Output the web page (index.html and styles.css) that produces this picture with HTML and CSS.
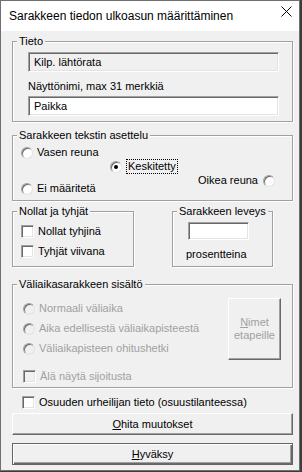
FILE: index.html
```html
<!DOCTYPE html>
<html lang="fi">
<head>
  <meta charset="UTF-8">
  <title>Sarakkeen tiedon ulkoasun määrittäminen</title>
  <link rel="stylesheet" href="styles.css">
</head>
<body>
  <div class="dialog">
    <div class="titlebar">
      <span class="title">Sarakkeen tiedon ulkoasun määrittäminen</span>
      <svg class="close" width="11" height="11" viewBox="0 0 11 11">
        <path d="M0.5 0.5 L10.5 10.5 M10.5 0.5 L0.5 10.5" stroke="#000" stroke-width="1" fill="none"/>
      </svg>
    </div>

    <div class="content">
      <!-- Tieto -->
      <fieldset class="group">
        <legend>Tieto</legend>
        <div class="group-body tieto">
          <div class="field readonly">Kilp. lähtörata</div>
          <div class="field-label">Näyttönimi, max 31 merkkiä</div>
          <div class="field">Paikka</div>
        </div>
      </fieldset>

      <!-- tekstin asettelu -->
      <fieldset class="group align-group">
        <legend>Sarakkeen tekstin asettelu</legend>
        <div class="group-body align">
          <div class="option"><span class="radio"></span>Vasen reuna</div>
          <div class="option center-opt"><span class="radio checked"></span><span class="focused">Keskitetty</span></div>
          <div class="align-last">
            <div class="option none-opt"><span class="radio"></span>Ei määritetä</div>
            <div class="option right-opt">Oikea reuna<span class="radio"></span></div>
          </div>
        </div>
      </fieldset>

      <div class="pair">
        <fieldset class="group zeros">
          <legend>Nollat ja tyhjät</legend>
          <div class="group-body zeros-body">
            <div class="option"><span class="check"></span>Nollat tyhjinä</div>
            <div class="option"><span class="check"></span>Tyhjät viivana</div>
          </div>
        </fieldset>
        <fieldset class="group width-group">
          <legend>Sarakkeen leveys</legend>
          <div class="group-body width-body">
            <div class="field small"></div>
            <div class="unit">prosentteina</div>
          </div>
        </fieldset>
      </div>

      <!-- väliajat, ei käytössä -->
      <fieldset class="group split-group">
        <legend>Väliaikasarakkeen sisältö</legend>
        <div class="group-body split-body">
          <div class="split-top">
            <div class="split-options">
              <div class="option disabled"><span class="radio"></span>Normaali väliaika</div>
              <div class="option disabled"><span class="radio"></span>Aika edellisestä väliaikapisteestä</div>
              <div class="option disabled"><span class="radio"></span>Väliaikapisteen ohitushetki</div>
            </div>
            <button class="btn names" disabled><u>N</u>imet<br>etapeille</button>
          </div>
          <div class="option disabled no-rank"><span class="check"></span>Älä näytä sijoitusta</div>
        </div>
      </fieldset>

      <div class="option leg-opt"><span class="check"></span>Osuuden urheilijan tieto (osuustilanteessa)</div>

      <button class="btn wide"><u>O</u>hita muutokset</button>
      <button class="btn wide default"><u>H</u>yväksy</button>
    </div>
  </div>
</body>
</html>
```

FILE: styles.css
```css
* {
  box-sizing: border-box;
}

html, body {
  margin: 0;
  padding: 0;
  background: #3c3c3c;
}

body {
  font-family: 'Liberation Sans', Arial, sans-serif;
  font-size: 11px;
  line-height: 13px;
  color: #000;
}

.dialog {
  width: 300px;
  height: 471px;
  border: 1px solid #707070;
  background: #f0f0f0;
  display: flex;
  flex-direction: column;
}

/* otsikkopalkki */
.titlebar {
  height: 30px;
  background: #fff;
  display: flex;
  align-items: center;
  padding-left: 8px;
  padding-right: 7px;
}

.title {
  font-size: 12px;
  line-height: 30px;
  flex: 1;
}

.close {
  display: block;
  margin-top: -10px;
}

.content {
  padding: 4px 6px 0 11px;
  display: flex;
  flex-direction: column;
}

/* ryhmälaatikot */
.group {
  margin: 0;
  padding: 0;
  min-width: 0;
  border: 1px solid #a0a0a0;
  box-shadow: inset 1px 1px 0 #fff, 1px 1px 0 #fff;
}

.group legend {
  margin-left: 4px;
  padding: 0 2px;
  line-height: 13px;
  background: #f0f0f0;
}

.group-body.tieto {
  padding: 4px 13px 5px 15px;
}

.field {
  height: 20px;
  background: #fff;
  border: 1px solid;
  border-color: #a0a0a0 #fff #fff #a0a0a0;
  box-shadow: inset 1px 1px 0 #696969, inset -1px -1px 0 #e3e3e3;
  padding: 3px 4px 0 5px;
}

.field.readonly {
  background: #f0f0f0;
}

.field-label {
  margin-top: 8px;
}

.tieto .field-label + .field {
  margin-top: 3px;
}

.option {
  display: flex;
  align-items: center;
  gap: 4px;
  height: 13px;
}

.radio {
  width: 12px;
  height: 12px;
  flex: none;
  border-radius: 50%;
  background: #fff;
  border: 1px solid;
  border-color: #a0a0a0 #e3e3e3 #e3e3e3 #a0a0a0;
  box-shadow: inset 1px 1px 0 #696969;
  position: relative;
}

.radio.checked::after {
  content: '';
  position: absolute;
  left: 3px;
  top: 3px;
  width: 4px;
  height: 4px;
  border-radius: 50%;
  background: #000;
}

.check {
  width: 13px;
  height: 13px;
  flex: none;
  background: #fff;
  border: 1px solid;
  border-color: #a0a0a0 #fff #fff #a0a0a0;
  box-shadow: inset 1px 1px 0 #696969, inset -1px -1px 0 #e3e3e3;
}

/* asettelu */
.align-group {
  margin-top: 7px;
}

.group-body.align {
  padding: 4px 17px 5px 8px;
}

.center-opt {
  height: 15px;
  margin-left: 89px;
}

.focused {
  border: 1px dotted #000;
  padding: 0 1px;
  line-height: 13px;
}

.align-last {
  display: flex;
  align-items: flex-start;
}

.none-opt {
  margin-top: 8px;
}

.right-opt {
  margin-left: auto;
  gap: 5px;
}

/* nollat + leveys */
.pair {
  display: flex;
  align-items: stretch;
  margin-top: 4px;
}

.zeros {
  width: 122px;
}

.zeros-body {
  padding: 7px 0 8px 8px;
  display: flex;
  flex-direction: column;
  gap: 7px;
}

.width-group {
  width: 101px;
  margin-left: 38px;
}

.width-body {
  padding-top: 4px;
}

.field.small {
  width: 61px;
  height: 18px;
  margin-left: 15px;
}

.unit {
  margin-top: 8px;
  margin-left: 13px;
}

/* väliaika */
.split-group {
  margin-top: 11px;
}

.split-body {
  padding: 7px 11px 4px 10px;
}

.split-top {
  display: flex;
  align-items: flex-start;
}

.split-options {
  margin-top: 4px;
  display: flex;
  flex-direction: column;
  gap: 7px;
}

.split-options .option + .option {
  margin-top: 0;
}

.option.disabled {
  color: #a0a0a0;
}

.option.disabled .radio,
.option.disabled .check {
  background: #f0f0f0;
}

.no-rank {
  margin-top: 10px;
}

.leg-opt {
  margin-top: 8px;
  margin-left: 10px;
}

/* painikkeet */
.btn {
  font-family: inherit;
  font-size: 11px;
  line-height: 13px;
  color: #000;
  background: #f0f0f0;
  border: 1px solid;
  border-color: #fff #696969 #696969 #fff;
  box-shadow: inset -1px -1px 0 #a0a0a0;
  padding: 0;
  margin: 0;
}

.btn.names {
  width: 53px;
  height: 62px;
  margin-left: auto;
  color: #a0a0a0;
}

.btn.wide {
  width: 281px;
  height: 22px;
  margin-top: 4px;
}

.btn.default {
  margin-top: 8px;
  border-color: #646464;
  box-shadow: inset 1px 1px 0 #fff, inset -1px -1px 0 #696969, inset -2px -2px 0 #a0a0a0;
}
```
